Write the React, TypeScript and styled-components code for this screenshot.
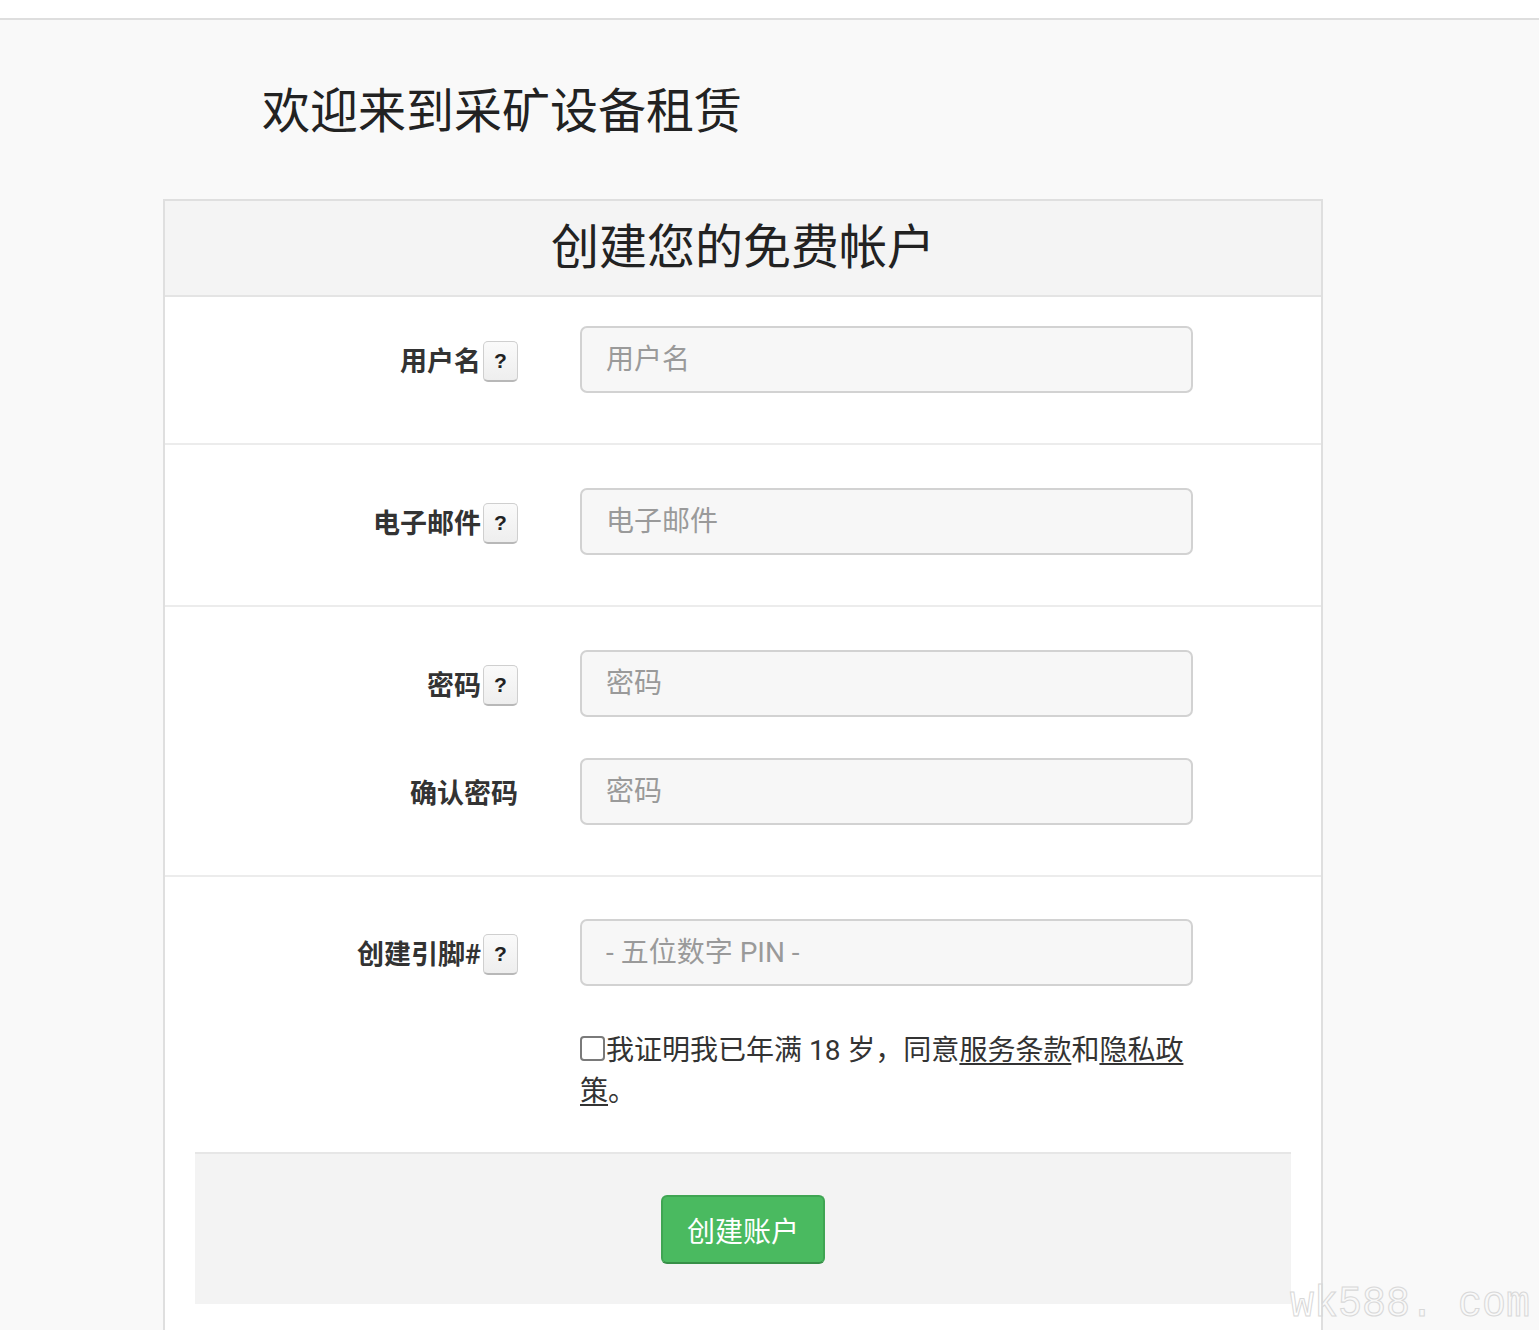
import React from "react";
import styled, { createGlobalStyle } from "styled-components";

const GlobalStyle = createGlobalStyle`
  html, body {
    margin: 0;
    padding: 0;
    background: #f9f9f9;
  }
  body {
    font-family: "Helvetica Neue", Roboto, "Noto Sans CJK SC", sans-serif;
    color: #333;
    overflow: hidden;
  }
  * {
    box-sizing: border-box;
  }
`;

type FieldType = {
  label: string;
  placeholder: string;
  help?: boolean;
  type?: string;
};

const sections: FieldType[][] = [
  [{ label: "用户名", placeholder: "用户名", help: true }],
  [{ label: "电子邮件", placeholder: "电子邮件", help: true }],
  [
    { label: "密码", placeholder: "密码", help: true, type: "password" },
    { label: "确认密码", placeholder: "密码", type: "password" },
  ],
];

const App: React.FC = () => {
  return (
    <Wrap>
      <GlobalStyle />
      <TopBar />
      <Page>
        <Welcome>欢迎来到采矿设备租赁</Welcome>
        <Card>
          <CardHeader>创建您的免费帐户</CardHeader>
          {sections.map((fields, idx) => (
            <Section key={idx} first={idx === 0}>
              {fields.map((f) => (
                <FormRow key={f.label}>
                  <Label>
                    {f.label}
                    {f.help && <HelpButton type="button">?</HelpButton>}
                  </Label>
                  <Input type={f.type || "text"} placeholder={f.placeholder} />
                </FormRow>
              ))}
            </Section>
          ))}
          <Section last>
            <FormRow>
              <Label>
                创建引脚#
                <HelpButton type="button">?</HelpButton>
              </Label>
              <Input type="text" placeholder="- 五位数字 PIN -" />
            </FormRow>
            <FormRow>
              <span />
              <Agree>
                <Checkbox type="checkbox" />
                我证明我已年满 18 岁，同意<Link>服务条款</Link>和
                <Link>隐私政策</Link>。
              </Agree>
            </FormRow>
          </Section>
          <Footer>
            <SubmitButton type="button">创建账户</SubmitButton>
          </Footer>
        </Card>
      </Page>
      <Watermark>wk588. com</Watermark>
    </Wrap>
  );
};

export default App;

const Wrap = styled.div`
  position: relative;
  height: 1330px;
  overflow: hidden;
`;

const TopBar = styled.div`
  height: 20px;
  background: #fff;
  border-bottom: 2px solid #dedede;
`;

const Page = styled.div`
  padding-left: 163px;
`;

const Welcome = styled.h1`
  margin: 68px 0 0 99px;
  height: 111px;
  font-size: 48px;
  line-height: 48px;
  font-weight: 400;
  color: #222;
`;

const Card = styled.div`
  width: 1160px;
  min-height: 1200px;
  background: #fff;
  border: 2px solid #dfdfdf;
  border-bottom: none;
`;

const CardHeader = styled.div`
  height: 96px;
  background: #f4f4f4;
  border-bottom: 2px solid #e4e4e4;
  text-align: center;
  font-size: 48px;
  line-height: 94px;
  color: #222;
`;

const Section = styled.div<{ first?: boolean; last?: boolean }>`
  display: flex;
  flex-direction: column;
  gap: ${(p) => (p.last ? "44px" : "41px")};
  padding: ${(p) => (p.first ? "29px" : p.last ? "42px" : "43px")} 0
    ${(p) => (p.last ? "40px" : "50px")};
  border-bottom: ${(p) => (p.last ? "none" : "2px solid #ececec")};
`;

const FormRow = styled.div`
  display: grid;
  grid-template-columns: 353px 613px;
  column-gap: 62px;
  align-items: center;
`;

const Label = styled.label`
  display: flex;
  justify-content: flex-end;
  align-items: center;
  font-size: 27px;
  font-weight: 700;
  color: #333;
`;

const HelpButton = styled.button`
  width: 35px;
  height: 41px;
  margin-left: 2px;
  margin-top: 4px;
  padding: 0;
  background: linear-gradient(#fafafa, #eeeeee);
  border: 1px solid #cfcfcf;
  border-bottom: 2px solid #b8b8b8;
  border-radius: 5px;
  font-family: "Liberation Sans", Arial, sans-serif;
  font-size: 21px;
  font-weight: 700;
  color: #222;
`;

const Input = styled.input`
  height: 67px;
  width: 613px;
  padding: 0 24px;
  background: #f7f7f7;
  border: 2px solid #d2d2d2;
  border-radius: 7px;
  font-family: inherit;
  font-size: 28px;
  color: #333;
  outline: none;

  &::placeholder {
    color: #9a9a9a;
  }
`;

const Agree = styled.div`
  font-size: 28px;
  line-height: 41px;
  color: #333;
`;

const Checkbox = styled.input`
  appearance: none;
  width: 25px;
  height: 25px;
  margin: 0 1px 0 0;
  vertical-align: -1px;
  background: #fff;
  border: 2px solid #7a7a7a;
  border-radius: 4px;
`;

const Link = styled.a`
  color: #333;
  text-decoration: underline;
  text-underline-offset: 3px;
  text-decoration-thickness: 2px;
`;

const Footer = styled.div`
  display: flex;
  justify-content: center;
  margin: 0 30px;
  padding-top: 41px;
  height: 152px;
  background: #f3f3f3;
  border-top: 2px solid #e6e6e6;
`;

const SubmitButton = styled.button`
  width: 164px;
  height: 69px;
  background: #4aba60;
  border: 2px solid #3fa553;
  border-bottom-color: #368f47;
  border-radius: 6px;
  color: #fff;
  font-family: inherit;
  font-size: 28px;
`;

const Watermark = styled.div`
  position: absolute;
  left: 1290px;
  top: 1280px;
  font-family: "Liberation Mono", monospace;
  font-size: 40px;
  line-height: 44px;
  color: transparent;
  -webkit-text-stroke: 1px #d8d8d8;
  transform: scaleY(1.12);
  transform-origin: top left;
  white-space: nowrap;
`;
